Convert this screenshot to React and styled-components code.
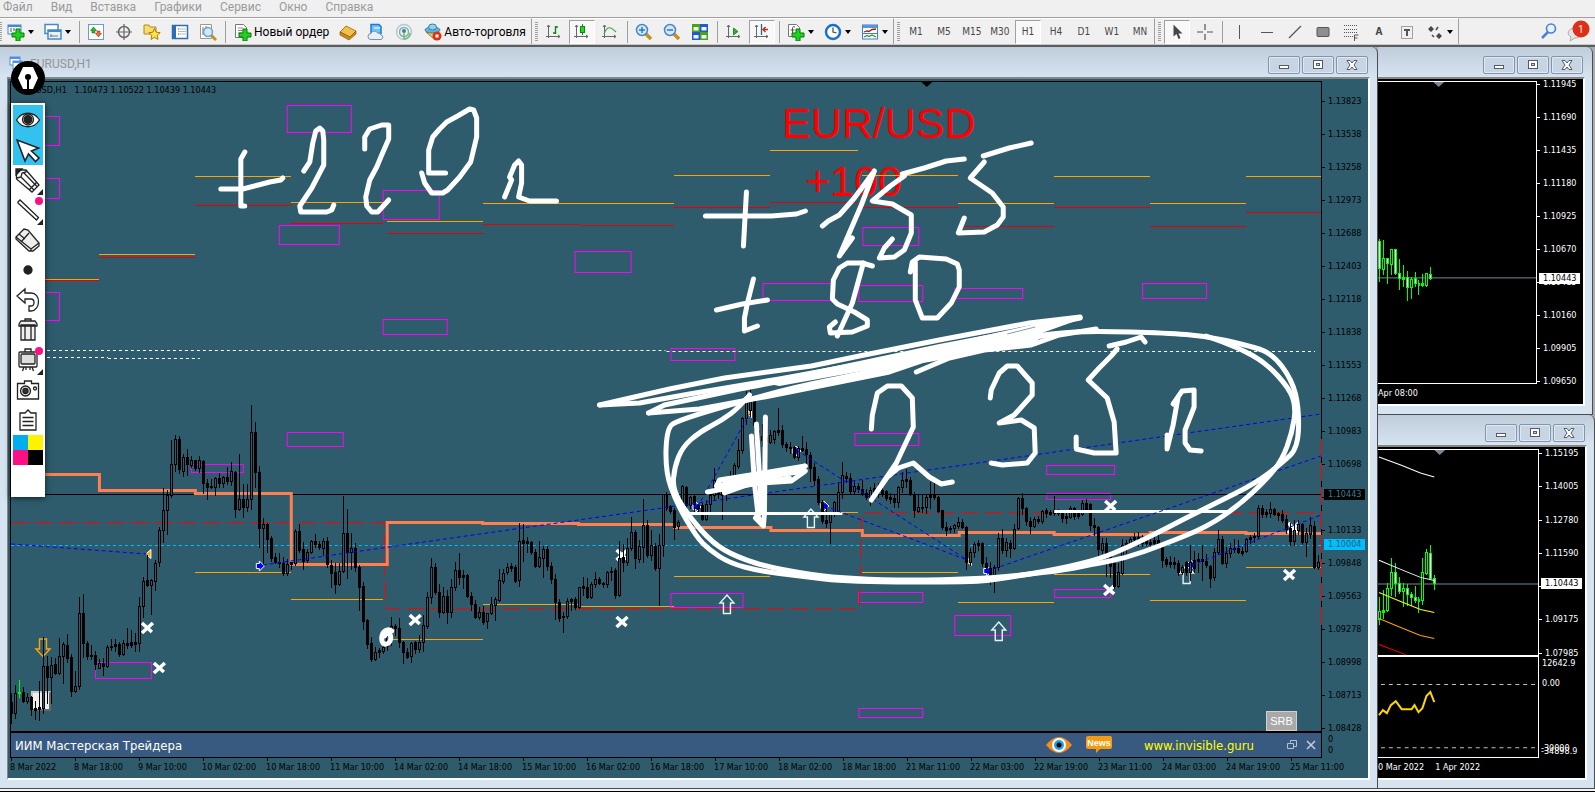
import React, { useState } from 'react';
import styled, { createGlobalStyle, css } from 'styled-components';

const TEAL = '#2e5c6d';

const GlobalStyle = createGlobalStyle`
  * {
    box-sizing: border-box;
  }

  body {
    margin: 0;
    background: #f0f0f0;
    font-family: Roboto, 'Noto Sans', sans-serif;
    font-size: 12px;
  }

  button {
    padding: 0;
    border: 0;
    background: none;
    color: inherit;
    font: inherit;
  }
`;

const Page = styled.div`
  display: flex;
  flex-direction: column;
  min-height: 100vh;
  overflow: hidden;
`;

/* ---------- menu and toolbar ---------- */

const MenuBar = styled.nav`
  display: flex;
  align-items: flex-start;
  gap: 18px;
  height: 17px;
  padding-left: 3px;
  color: #9a9a9a;
  line-height: 14px;
`;

const ToolBar = styled.div`
  display: flex;
  height: 28px;
  border-top: 1px solid #a0a0a0;
  border-bottom: 1px solid #c8c8c8;
`;

const Group = styled.div`
  display: flex;
  align-items: center;
  border-top: 1px solid #fff;
  border-right: 1px solid #a0a0a0;
`;

const Grip = styled.span`
  width: ${props => (props.$edge ? 2 : 3)}px;
  height: 20px;
  margin: ${props => (props.$edge ? '0' : '0 2px 0 3px')};
  background: repeating-linear-gradient(#a0a0a0 0 1px, transparent 1px 2px);
`;

const Separator = styled.span`
  width: 1px;
  height: 22px;
  margin: 0 2px 0 3px;
  background: #a0a0a0;
`;

const ToolButton = styled.button`
  display: flex;
  align-items: center;
  justify-content: center;
  width: 26px;
  height: 24px;
  margin: 0 1px;
  color: #484848;
  font-family: 'DejaVu Sans Condensed', 'DejaVu Sans', sans-serif;
  font-size: 10px;

  ${props =>
    props.$pressed &&
    css`
      border: 1px solid;
      border-color: #a0a0a0 #fff #fff #a0a0a0;
      background: #f8f8f8;
    `}
`;

const DropButton = styled.button`
  display: flex;
  align-items: center;
  gap: 3px;
  width: 37px;
  height: 24px;
  padding-left: 5px;

  &::after {
    content: '';
    border: 3px solid transparent;
    border-top: 4px solid #000;
    border-bottom: 0;
  }
`;

const TextButton = styled.button`
  display: flex;
  align-items: center;
  gap: 2px;
  height: 24px;
  padding: 0 5px 0 6px;
  color: #000;
  white-space: nowrap;
`;

const Tray = styled.div`
  display: flex;
  align-items: center;
  gap: 8px;
  margin-left: auto;
  padding-right: 5px;
`;

/* ---------- MDI windows ---------- */

const Workspace = styled.main`
  display: grid;
  grid-template-columns: minmax(0, 1fr) 217px;
  flex: 1;
  border-top: 2px solid #5c5c5c;
  background: #a9adb3;
`;

const Windows = styled.div`
  display: flex;
  flex-direction: column;
  min-width: 0;
`;

const Frame = styled.section`
  position: relative;
  display: flex;
  flex: ${props => props.$share || 1} 0 0;
  flex-direction: column;
  min-width: 0;
  margin-right: ${props => props.$inset || 0}px;
  padding: 0 7px 8px ${props => (props.$main ? 7 : 0)}px;
  border-right: 1px solid #4d4d4d;
  border-bottom: 1px solid #4d4d4d;
  border-top-right-radius: 6px;
  background: linear-gradient(#bfccda, #d6e3f0 30px);
`;

const TitleBar = styled.header`
  display: flex;
  gap: 2px;
  height: 30px;
  padding: 9px 2px 0 2px;
  color: #959595;
  line-height: 16px;
`;

const WindowName = styled.h1`
  flex: 1;
  margin: 0;
  padding-left: 5px;
  font-size: 12px;
  font-weight: 400;
`;

const WindowButton = styled.button`
  display: flex;
  align-items: center;
  justify-content: center;
  width: 32px;
  height: 18px;
  border: 1px solid #8593ab;
  border-radius: 2px;
  background: #c6d4e4;
  box-shadow: inset 0 0 0 1px #dde8f3;
`;

const Client = styled.div`
  display: flex;
  flex: 1;
  flex-direction: column;
  min-height: 0;
  padding: ${props => (props.$dark ? '2px 0 0' : '2px 0 0 2px')};
  border: solid #fff;
  border-width: 2px 2px 2px ${props => (props.$dark ? 0 : 1)}px;
  border-top-color: #868686;
  border-left-color: #868686;
  background: ${props => (props.$dark ? '#000' : TEAL)};
  color: ${props => (props.$dark ? '#fff' : '#000')};
  font-family: 'DejaVu Sans Condensed', 'DejaVu Sans', sans-serif;
  font-size: 9px;
  line-height: 11px;
`;

const Row = styled.div`
  position: relative;
  display: flex;
  flex: ${props => (props.$grow ? `${props.$grow} 0 0` : 'none')};
  min-height: 0;
`;

const Plot = styled.div`
  position: relative;
  flex: 1;
  min-width: 0;
  border: 1px solid ${props => (props.$light ? '#fff' : '#000')};
  border-left-width: ${props => (props.$light ? 0 : 1)}px;

  & > svg {
    position: absolute;
    inset: 0;
    width: 100%;
    height: 100%;
    overflow: visible;
  }
`;

const Axis = styled.div`
  position: relative;
  display: flex;
  flex-direction: column;
  justify-content: space-between;
  width: 46px;
  margin: ${props => props.$margin || '0'};
`;

const Price = styled.span`
  display: flex;
  align-items: center;
  height: 11px;

  &::before {
    content: '';
    width: 3px;
    height: 1px;
    margin-right: 3px;
    background: currentColor;
  }
`;

const PriceTag = styled.span`
  position: absolute;
  top: ${props => props.$top}px;
  left: 2px;
  width: 41px;
  height: 11px;
  padding-left: 4px;
  background: ${props => props.$bg};
  color: ${props => props.$ink};
`;

const TimeAxis = styled.div`
  display: grid;
  grid-template-columns: repeat(21, minmax(0, 1fr));
  height: 20px;
  padding-right: 14px;
`;

const Time = styled.span`
  position: relative;
  padding-top: 4px;
  white-space: nowrap;

  &::before {
    content: '';
    position: absolute;
    top: 0;
    left: 1px;
    height: 3px;
    border-left: 1px solid currentColor;
  }
`;

const SideTimes = styled.div`
  display: flex;
  gap: 11px;
  height: 20px;
  padding-top: 4px;
  overflow: hidden;
  white-space: nowrap;
`;

const Quote = styled.div`
  position: absolute;
  top: 3px;
  left: 8px;
  white-space: pre;
`;

const BigNote = styled.div`
  position: absolute;
  top: ${props => props.$top}px;
  left: ${props => props.$left}px;
  color: #f00;
  font-family: 'Liberation Sans', Arial, sans-serif;
  font-size: 43px;
  line-height: 48px;
`;

const Srb = styled.button`
  position: absolute;
  right: 24px;
  bottom: 0;
  width: 31px;
  height: 20px;
  border: 1px solid #d0d0d0;
  background: #a9a9a9;
  color: #fff;
  font-family: 'Liberation Sans', Arial, sans-serif;
  font-size: 11px;
`;

const ClosePatch = styled.button`
  position: absolute;
  top: 609px;
  left: 20px;
  width: 20px;
  height: 20px;
  border: 2px solid;
  border-color: #c8c8c8 #666 #666 #c8c8c8;
  background: #ededed;
`;

const Indicator = styled.div`
  display: flex;
  flex: 1;
  align-items: center;
  height: 26px;
  padding: 0 5px 0 4px;
  border: 1px solid #000;
  background: #385a80;
  color: #fff;
`;

const IndicatorName = styled.span`
  margin-right: auto;
  font-size: 13px;
`;

const SiteLink = styled.a`
  margin: 0 32px;
  color: #ff0;
  font-size: 13px;
  text-decoration: none;
`;

const IconButton = styled.button`
  display: flex;
  margin-left: ${props => props.$gap || 0}px;
`;

const ZeroAxis = styled.div`
  width: 46px;
  padding: 2px 0 0 6px;
`;

const SubLabels = styled.div`
  position: relative;
  display: flex;
  flex-direction: column;
  gap: 9px;
  width: 46px;
  padding: 2px 0 0 3px;
`;

const LowLabel = styled.span`
  position: absolute;
  bottom: ${props => props.$bottom}px;
  left: 2px;
`;

const StatusStrip = styled.footer`
  height: 3px;
  border-bottom: 1px solid #000;
  background: #f4f4f4;
`;

/* ---------- floating pen panel ---------- */

const PenPanel = styled.aside`
  position: absolute;
  top: 14px;
  left: 11px;
  width: 34px;
`;

const PenBadge = styled.button`
  display: block;
  width: 34px;
  height: 34px;
  border-radius: 50%;
  background: #000;
`;

const PenTools = styled.div`
  display: grid;
  grid-template-columns: 30px;
  margin-top: 8px;
  padding: 2px 2px 32px;
  background: #fff;
  box-shadow: 0 1px 6px rgba(0, 0, 0, 0.7);
`;

const PenTool = styled.button`
  position: relative;
  height: 30px;
  background: ${props => (props.$active ? '#33c1ef' : 'transparent')};

  & > svg {
    display: block;
  }

  ${props =>
    props.$more &&
    css`
      &::after {
        content: '';
        position: absolute;
        right: 0;
        bottom: 0;
        border: 3px solid #222;
        border-top-color: transparent;
        border-left-color: transparent;
      }
    `}
`;

const Swatches = styled.div`
  display: grid;
  grid-template-columns: 15px 15px;
`;

const Swatch = styled.button`
  height: 15px;
  background: ${props => props.$color};
`;

/* ---------- data ---------- */

// high, top of body, bottom of body, low; u = hollow, d = filled
const CANDLES = `693 702 713 723 d,685 693 713 718 u,680 692 693 697 g,687 692 701 702 d,693 697 701 703 u,
696 697 709 715 d,701 708 710 719 d,681 707 709 720 d,637 666 708 713 u,656 666 677 703 d,657 665 677 703 u,
658 664 673 674 d,638 656 673 674 u,642 644 656 683 u,634 645 658 662 d,654 657 691 696 d,671 686 691 692 u,
597 613 686 689 u,594 613 643 657 d,641 643 656 659 d,645 655 656 659 d,651 655 664 669 d,659 663 668 668 u,
658 663 666 675 d,645 647 666 667 u,639 646 647 650 d,639 644 646 651 d,642 644 654 656 d,640 643 654 655 u,
628 643 645 648 d,630 642 645 647 d,633 642 644 651 d,597 606 643 651 u,577 581 606 617 u,555 580 585 586 d,
579 580 585 614 u,560 563 581 590 u,527 530 562 566 u,488 510 530 542 u,490 495 510 534 u,440 464 495 497 u,
435 439 464 471 u,436 439 469 473 d,454 457 471 476 u,449 457 464 475 d,456 460 465 467 u,460 460 468 470 d,
456 460 468 472 u,460 461 483 493 d,479 483 487 499 d,479 486 487 488 d,477 478 487 495 u,473 478 483 487 d,
476 477 483 487 u,467 477 481 484 d,462 471 481 485 u,471 472 509 517 d,454 499 509 510 u,484 499 507 517 d,
484 499 507 511 u,405 432 499 509 u,422 432 472 487 d,466 472 528 547 d,518 524 528 563 u,523 524 539 552 d,
536 538 558 561 d,553 557 562 563 d,553 562 563 567 d,557 563 573 575 d,559 564 573 575 u,562 562 564 569 d,
529 531 563 565 u,524 531 550 552 d,542 549 561 569 d,549 552 560 562 u,540 541 552 553 u,534 541 544 547 d,
541 544 547 549 d,538 541 548 555 u,537 541 564 567 d,560 565 573 587 d,563 572 584 593 d,563 571 584 585 u,
496 533 571 572 u,509 533 552 578 d,533 548 552 569 u,543 548 567 571 d,565 567 587 610 d,582 586 621 629 d,
619 620 644 648 d,637 643 659 661 d,647 652 659 660 u,648 650 652 657 d,645 647 651 653 u,630 636 646 650 u,
617 626 640 645 u,624 626 628 635 d,618 628 642 647 d,641 642 652 663 d,648 652 657 658 d,642 643 656 662 u,
641 642 649 653 d,635 642 649 652 u,615 625 642 651 u,592 597 626 628 u,558 567 597 603 u,563 567 592 594 d,
584 592 612 617 d,587 596 612 613 u,590 596 612 623 d,579 587 612 617 u,562 570 587 590 u,553 570 577 584 d,
570 575 577 588 d,574 575 596 597 d,592 596 604 610 d,600 604 617 618 d,607 612 617 619 u,606 612 622 624 d,
613 613 621 628 u,597 604 613 614 u,597 599 605 620 u,569 580 600 601 u,569 573 581 583 u,563 567 572 574 u,
563 566 568 571 d,565 567 581 582 d,523 541 580 586 u,524 540 543 561 d,537 541 543 552 d,541 542 552 554 d,
549 552 566 567 d,541 557 566 567 u,546 549 558 577 u,546 549 566 570 d,562 566 579 583 d,574 579 602 619 d,
599 602 618 621 d,612 616 617 632 d,598 601 616 618 u,598 599 601 610 d,597 599 607 609 d,587 587 607 608 u,
577 586 588 595 d,578 587 597 598 d,582 584 597 598 u,572 579 584 587 u,577 579 583 584 d,582 583 584 587 d,
571 572 584 587 u,567 571 572 580 d,568 570 595 598 d,541 558 595 596 u,544 557 562 571 d,538 548 562 565 u,
517 532 548 550 u,530 532 558 568 d,540 546 559 562 u,499 525 547 562 u,520 525 555 557 d,530 545 555 560 u,
543 546 568 570 d,534 545 568 605 u,494 494 545 556 u,492 494 508 510 d,505 506 511 513 d,508 510 527 539 d,
520 522 526 529 u,485 486 512 515 u,486 487 505 510 d,496 497 505 508 u,495 496 504 512 d,504 505 508 514 d,
503 505 519 520 d,500 504 519 520 u,490 495 504 512 u,468 480 495 500 u,478 482 494 498 d,484 486 495 519 d,
480 484 492 500 u,471 478 486 492 u,463 465 477 480 u,439 450 466 468 u,417 418 450 453 u,391 395 418 424 u,
389 396 410 416 u,398 400 425 430 d,425 430 440 450 d,424 436 440 446 d,420 437 441 443 d,430 435 442 443 u,
430 431 439 443 u,408 430 432 435 d,425 430 444 447 d,442 444 447 451 d,442 447 448 453 d,446 447 457 458 d,
446 448 457 460 u,436 448 450 451 d,442 449 454 463 d,452 455 468 481 d,463 467 480 485 d,476 479 502 504 d,
500 502 521 523 d,507 520 523 527 d,512 514 522 543 u,501 502 514 516 u,482 492 513 514 u,462 475 492 498 u,
472 476 478 482 d,473 478 491 493 d,480 486 491 493 u,483 486 489 492 d,480 489 493 495 d,489 493 497 499 d,
487 490 497 505 u,483 488 492 495 d,483 489 492 497 d,487 490 494 496 d,490 491 498 500 d,493 497 499 503 d,
495 498 502 507 d,486 487 502 507 u,472 480 487 492 u,469 479 481 487 d,477 480 493 495 d,492 494 510 517 d,
495 507 511 512 u,495 507 508 512 d,494 497 507 513 u,482 494 497 508 d,483 494 497 499 d,496 497 511 512 d,
510 510 527 529 d,522 527 530 535 d,526 528 529 532 d,524 525 528 532 u,517 522 526 528 u,519 522 527 528 d,
526 527 562 569 d,548 552 562 565 u,542 544 552 557 u,540 543 545 550 d,542 543 563 566 d,557 563 567 568 d,
562 568 578 584 d,565 567 578 592 u,533 538 567 570 u,529 538 550 553 d,538 542 550 556 u,540 543 548 557 d,
524 529 548 549 u,497 498 528 529 u,493 498 508 514 d,507 508 521 525 d,517 521 526 533 d,517 519 526 527 u,
516 519 521 523 d,510 511 521 523 u,508 510 513 517 d,510 512 514 515 d,496 510 513 515 d,509 511 513 515 d,
511 512 518 522 d,512 516 518 523 u,506 508 517 518 u,507 508 516 519 d,510 512 516 518 d,500 503 514 515 u,
499 503 511 512 d,503 504 525 530 d,518 525 527 535 d,526 527 549 557 d,538 543 550 553 u,538 543 555 576 d,
553 556 566 577 d,560 563 586 588 d,563 572 586 587 u,539 545 573 574 u,540 543 547 553 d,537 539 544 547 u,
533 537 539 543 d,532 537 543 546 d,535 538 543 546 d,537 539 543 545 d,538 542 544 546 d,537 540 543 545 d,
530 540 546 547 d,546 547 560 567 d,557 559 564 566 d,556 562 564 567 d,557 562 564 568 d,560 563 572 575 d,
565 567 572 574 u,561 562 572 575 d,545 562 572 580 u,551 560 568 572 d,553 559 561 572 d,545 559 561 580 d,
554 561 565 567 d,565 566 578 587 d,548 552 577 580 u,530 539 552 554 u,536 539 563 564 d,547 553 563 567 u,
543 548 553 557 u,539 548 549 552 d,540 548 552 553 d,547 551 553 555 d,538 539 551 552 u,535 537 539 543 d,
533 536 537 542 d,505 508 536 538 u,505 508 514 517 d,509 512 514 517 d,502 509 513 517 u,508 509 514 515 d,
512 513 515 520 d,510 514 520 522 d,515 519 529 533 d,523 528 541 545 d,520 530 541 545 u,520 524 530 534 u,
523 524 542 544 d,528 533 542 556 u,517 525 534 538 u,521 526 567 568 d,555 562 567 569 u`;

const HOUR4 = `239 241 269 282 d,240 259 270 275 u,259 259 264 284 d,250 250 265 275 u,250 250 274 275 d,
260 274 279 290 d,266 278 280 287 d,272 278 288 301 d,278 280 288 299 u,273 279 284 287 d,281 284 286 295 d,
275 284 286 287 d,274 274 286 287 u,268 275 279 280 d`;

const DAILY = `597 611 618 623 u,590 610 612 617 d,583 588 610 611 u,558 572 588 595 u,563 572 583 596 d,
577 583 591 593 d,583 588 591 606 u,584 588 594 605 d,592 594 597 605 d,586 597 600 602 d,597 599 601 612 d,
558 572 600 604 u,549 552 573 574 u,545 553 578 579 d,575 578 583 589 d`;

const PRICES = ['1.13823', '1.13538', '1.13258', '1.12973', '1.12688', '1.12403', '1.12118', '1.11838', '1.11553', '1.11268', '1.10983', '1.10698', '1.10413', '1.10133', '1.09848', '1.09563', '1.09278', '1.08998', '1.08713', '1.08428'];
const HOUR4_PRICES = ['1.11945', '1.11690', '1.11435', '1.11180', '1.10925', '1.10670', '1.10415', '1.10160', '1.09905', '1.09650'];
const DAILY_PRICES = ['1.15195', '1.14005', '1.12780', '1.11590', '1.10365', '1.09175', '1.07985'];
const TIMES = ['8 Mar 2022', '8 Mar 18:00', '9 Mar 10:00', '10 Mar 02:00', '10 Mar 18:00', '11 Mar 10:00', '14 Mar 02:00', '14 Mar 18:00', '15 Mar 10:00', '16 Mar 02:00', '16 Mar 18:00', '17 Mar 10:00', '18 Mar 02:00', '18 Mar 18:00', '21 Mar 11:00', '22 Mar 03:00', '22 Mar 19:00', '23 Mar 11:00', '24 Mar 03:00', '24 Mar 19:00', '25 Mar 11:00'];

// x1, x2, y
const ORANGE_LEVELS = [
  [45, 99, 279], [99, 195, 254], [195, 291, 176], [291, 383, 202], [387, 483, 221], [483, 675, 203],
  [675, 771, 175], [771, 859, 150], [863, 959, 175], [959, 1055, 203], [1055, 1151, 176], [1151, 1247, 203],
  [1247, 1322, 176], [195, 291, 572], [291, 383, 599], [387, 483, 639], [483, 579, 604], [579, 675, 606],
  [675, 771, 576], [771, 859, 512], [863, 959, 572], [959, 1055, 602], [1055, 1151, 574], [1151, 1247, 600],
  [1247, 1322, 567],
];
const RED_LEVELS = [
  [45, 99, 280], [99, 195, 257], [195, 291, 205], [291, 383, 223], [387, 483, 233], [483, 579, 224],
  [579, 675, 225], [675, 771, 207], [771, 859, 202], [863, 959, 207], [959, 1055, 226], [1055, 1151, 207],
  [1151, 1247, 226], [1247, 1322, 212],
];
// left, top, right, bottom
const ZONES = [
  [11, 116, 59, 145], [11, 178, 59, 198], [11, 292, 59, 320], [287, 105, 351, 132], [279, 225, 339, 244],
  [383, 190, 439, 219], [575, 251, 631, 272], [383, 319, 447, 334], [671, 348, 735, 360], [287, 432, 343, 446],
  [191, 464, 243, 472], [95, 662, 151, 678], [671, 593, 743, 607], [855, 433, 919, 445], [859, 592, 923, 602],
  [955, 615, 1011, 635], [1047, 465, 1115, 474], [1047, 493, 1111, 499], [1055, 589, 1111, 597],
  [863, 227, 919, 245], [763, 283, 832, 300], [859, 285, 923, 301], [955, 288, 1023, 298],
  [1143, 283, 1207, 298], [859, 708, 923, 717],
];
const TRADES = [
  '11,544 147,554', '263,565 1322,414', '698,507 750,414', '797,450 968,560', '825,506 968,560',
  '988,571 1322,456', '1193,565 1322,515',
];
const CROSSES = [[147, 628], [159, 668], [415, 620], [622, 555], [622, 622], [1111, 506], [1110, 590], [1290, 575], [1294, 528]];
const UP_ARROWS = [[727, 595], [811, 509], [999, 622], [1187, 565]];
const ENTRIES = [[260, 566], [697, 507], [797, 451], [825, 506], [988, 571], [1192, 565]];
const EXITS = [[149, 554], [750, 413], [970, 561]];

const STROKES = [
  '245,152 241,159 241,206 245,206',
  '221,189 243,189 270,182 281,180 283,178',
  '304,171 310,162 313,143 316,131 320,128 323,131 324,140 324,165 312,188 300,206 301,212 327,212 332,210 334,205',
  '365,149 365,137 370,129 382,125 389,125 389,139 382,155 377,167 370,180 366,197 367,206 372,212 378,212 389,200',
  '446,173 429,173 429,150 433,137 440,129 447,122 458,116 470,109 474,110 477,118 477,137 471,162 460,177 448,190 443,193 432,193 425,183 422,173',
  '505,197 512,180 510,177 515,165 519,161 522,165 522,183 519,197 530,201 557,201',
  '747,192 744,246',
  '706,216 772,216 797,214 806,211',
  '823,226 829,221 840,215 855,198 875,171 862,205 840,256 853,238',
  '965,159 947,161 925,168 903,174',
  '905,176 891,186 873,201 893,204 912,215 912,233 905,250 895,257 880,258 885,248 893,239',
  '1032,143 1010,148 984,156',
  '985,162 971,178 993,193 1004,207 1004,217 998,225 985,232 959,233 965,218',
  '754,279 748,303 745,318 745,331 758,326',
  '717,310 743,304 768,300',
  '873,266 863,263 848,263 840,268 834,280 833,299 838,304 855,312 868,320 868,326 853,332 831,333 830,327 836,322',
  '864,263 853,303 838,336',
  '911,272 913,262 920,257 947,259 958,264 960,270 960,287 952,303 938,318 923,318 916,300 916,262',
  '872,429 873,415 878,393 888,386 902,386 913,398 914,427 897,463 872,500 888,477 899,468 914,463 930,477 942,484 953,482',
  '991,398 992,390 1000,373 1008,366 1018,366 1033,383 1033,395 1015,415 1000,423 1022,420 1035,428 1036,453 1028,463 1003,465 992,463',
  '1146,342 1142,337 1127,342 1110,346',
  '1118,349 1112,356 1100,368 1089,380 1108,398 1115,422 1117,453 1095,453 1077,449 1077,437',
  '1168,435 1168,449 1174,425 1179,397 1174,404 1183,391 1195,390 1195,407 1186,430 1186,443 1191,450 1202,451',
  '766,417 765,513 764,526 756,518 762,510 757,424',
  '752,436 755,483 759,518 764,524',
  '708,492 740,486 806,466 770,472 720,480 717,486 770,476 806,471 792,481 750,484 725,493',
  '726,483 796,470 725,489 790,478',
  '600,405 670,389 725,378 812,366 860,356 940,340 1030,323 1081,317',
  '600,405 640,403 690,394 780,379 900,357 1030,328 1081,318',
  '649,413 665,405 740,389 830,372 920,355 1030,330',
  '649,413 700,409 770,396 840,382 890,372 940,355',
  '917,372 950,358 985,350 1032,345 1060,335 1097,329',
];

const LOOPS = [
  '920,360 862,374 790,388 677,420 667,430 666,472 677,503 697,537 710,550 730,563 760,571 800,576 850,582 975,582 1000,579 1060,569 1100,559 1127,548 1160,532 1183,520 1217,503 1257,483 1283,463 1299,448 1300,408 1293,380 1273,353 1247,345 1207,336 1167,333 1095,331 1057,333 1000,341',
  '750,395 740,407 723,420 700,432 683,447 675,467 673,490 690,517 713,543 737,557 775,569 850,580 975,580 1060,571 1090,565 1127,558 1163,545 1208,527 1240,505 1267,480 1283,460 1293,433 1297,407 1290,388 1267,363 1240,348 1207,336',
];

function smooth(points) {
  const list = points.split(' ').map(point => point.split(',').map(Number));
  const last = list[list.length - 1];
  const curves = list.slice(1, -1).map(([x, y], i) => {
    const [nx, ny] = list[i + 2];
    return `Q${x} ${y} ${(x + nx) / 2} ${(y + ny) / 2}`;
  });
  return `M${list[0].join(' ')}${curves.join('')}L${last.join(' ')}`;
}

/* ---------- chart parts ---------- */

function Candles({ data, start, line, hollow, solid }) {
  return (
    <g shapeRendering="crispEdges">
      {data.split(',').map((item, i) => {
        const [high, top, bottom, low, kind] = item.trim().split(' ');
        const x = start + i * 4;
        const height = Math.max(bottom - top, 1);
        const color = kind === 'g' ? '#0f0' : line;
        return (
          <g key={x}>
            <rect x={x} y={high} width="1" height={low - high + 1} fill={color} />
            <rect x={x - 1} y={top} width="3" height={height + 1} fill={color} />
            {height > 2 && (
              <rect x={x} y={+top + 1} width="1" height={height - 1} fill={kind === 'u' ? hollow : solid} />
            )}
          </g>
        );
      })}
    </g>
  );
}

function Levels({ items, color }) {
  return items.map(([x1, x2, y]) => <rect key={`${x1}-${y}`} x={x1} y={y} width={x2 - x1} height="1" fill={color} />);
}

function Markers() {
  return (
    <>
      <g fill="none" stroke="#fff" strokeWidth="3.500">
        {CROSSES.map(([x, y]) => <path key={`${x}-${y}`} d={`M${x - 5} ${y - 5}L${x + 5} ${y + 4}M${x + 6} ${y - 5}L${x - 5} ${y + 5}`} />)}
      </g>
      <g fill="none" stroke="#e8f4f4" strokeWidth="1.4">
        {UP_ARROWS.map(([x, y]) => <path key={x} d={`M${x + 0.5} ${y}l7 8h-3.500v10.500h-7v-10.500h-3.500z`} />)}
      </g>
      <path d="M39.500 639h7v10h3.500l-7 7.500-7-7.500h3.500z" fill="none" stroke="#ffa500" strokeWidth="1.4" />
      <g fill="#00f" stroke="#fff">
        {ENTRIES.map(([x, y]) => <path key={x} d={`M${x - 3.5} ${y - 2.5}h3v-2.500l5 5-5 5v-2.500h-3z`} />)}
      </g>
      <g fill="#ffa500" stroke="#fff">
        {EXITS.map(([x, y]) => <path key={x} d={`M${x - 3} ${y}l5-4.500v9z`} />)}
      </g>
    </>
  );
}

function MainChart() {
  return (
    <svg viewBox="11 82 1311 649" preserveAspectRatio="none">
      <g shapeRendering="crispEdges" fill="none">
        <Levels items={RED_LEVELS} color="#e80000" />
        <Levels items={ORANGE_LEVELS} color="#ffa500" />
        {ZONES.map(([l, t, r, b]) => (
          <rect key={`${l}-${t}`} x={l + 0.5} y={t + 0.5} width={r - l} height={b - t} stroke="#f0f" />
        ))}
        <path d="M11 494.5H1322" stroke="#000" />
        <path d="M11 545.5H1322" stroke="#00bfff" strokeDasharray="3 3" />
        <path d="M47 350.5H666M47 357.5H108M108 358.5H200M667 351.5H1316" stroke="#fff" strokeDasharray="3 3" />
        <path d="M11 522.5H384.500V560L386.500 608.500H860L862.500 512.500H1322" stroke="#f00" strokeDasharray="18 6" />
        <path d="M1322.500 439V626" stroke="#f00" strokeWidth="2" strokeDasharray="18 6" />
      </g>
      <path
        d="M45 474.500H99.500V490.500H195.500V493.500H291.500V564.500H387.500V522.500H483V523.500H579V524.500H675V527.500H771.500V530.500H863V535.500H960V532.500H1055V534.500H1151V532.500H1247V533.500H1322"
        fill="none"
        stroke="#ff7f50"
        strokeWidth="3"
      />
      <Markers />
      <Candles data={CANDLES} start={11} line="#000" hollow={TEAL} solid="#000" />
      <path d="M690 513.500H843M1055 511.500H1230" stroke="#fff" strokeWidth="3" />
      <g fill="none" stroke="#00f" strokeDasharray="4 3" shapeRendering="crispEdges">
        {TRADES.map(points => <polyline key={points} points={points} />)}
      </g>
      <path d="M922 82h11l-5.500 5z" fill="#000" />
      <path d="M11 752l5 5h-5z" fill="#000" />
      <path d="M392 631c-4-3-10 0-10 8s9 6 9-1c0-6-4-6-6-2" fill="none" stroke="#fff" strokeWidth="5" strokeLinecap="round" />
      <path d="M760 382L860 361 940 344 1040 325 1082 319 1040 334 1092 330 1040 339 1030 347 980 352 930 362 880 368 780 386z" fill="#fff" />
      <g fill="none" stroke="#fff" strokeWidth="5" strokeLinecap="round" strokeLinejoin="round">
        {STROKES.map(points => <polyline key={points} points={points} />)}
        {LOOPS.map(points => <path key={points} d={smooth(points)} />)}
      </g>
      <path d="M1008 334l28-7" stroke={TEAL} strokeWidth="0.6" />
    </svg>
  );
}

function WindowControls() {
  return (
    <>
      <WindowButton aria-label="Свернуть">
        <svg width="12" height="12"><rect x="1.500" y="6.500" width="9" height="3" fill="#fff" stroke="#555a6a" /></svg>
      </WindowButton>
      <WindowButton aria-label="Развернуть">
        <svg width="12" height="12" fill="#fff" stroke="#555a6a">
          <rect x="1.500" y="1.500" width="9" height="8" />
          <rect x="4.500" y="4.500" width="3" height="2" fill="#c6d4e4" />
        </svg>
      </WindowButton>
      <WindowButton aria-label="Закрыть">
        <svg width="12" height="12" fill="#fff" stroke="#555a6a">
          <path d="M1 1.500h3l2 2.500 2-2.500h3L8 6l3 4.500H8L6 8l-2 2.500H1L4 6z" />
        </svg>
      </WindowButton>
    </>
  );
}

/* ---------- toolbar icons ---------- */

const Plus = () => <path d="M9 6h4v4h4v4h-4v4H9v-4H5v-4h4z" fill="#1ed31e" stroke="#087808" />;
const Glass = () => (
  <>
    <path d="M10 10l6 6" stroke="#c8901a" strokeWidth="3.500" />
    <circle cx="7" cy="7" r="5.500" fill="#cfe8fa" stroke="#4a86c4" strokeWidth="1.500" />
  </>
);
const AxisLines = () => <path d="M3.500 2v13M1 13.500h14M2 4l1.500-2L5 4M13 12l2 1.500-2 1.500" stroke="#666" />;

const icons = {
  newChart: <><rect x="1" y="2" width="13" height="9" fill="#f4faff" stroke="#4788c8" /><path d="M1 3h13" stroke="#4788c8" strokeWidth="2" /><path d="M4 5v4M7 5v3" stroke="#555" /><Plus /></>,
  profiles: <><rect x="1" y="1.500" width="13" height="9" fill="#fff" stroke="#4788c8" strokeWidth="1.500" /><rect x="4" y="7" width="13" height="9" fill="#e8f2fc" stroke="#4788c8" strokeWidth="1.500" /><path d="M4 8h13" stroke="#4788c8" strokeWidth="2" /><path d="M6 13h8M7 11v3" stroke="#777" /></>,
  market: <><rect x="1.500" y="1.500" width="15" height="15" fill="#fff" stroke="#6a9ed0" /><path d="M6.500 4l3 3.500H8V10H5V7.500H3.500z" fill="#2bb52b" stroke="#087808" strokeWidth=".6" /><path d="M11.500 14l3-3.500H13V8h-3v2.500H8.500z" fill="#f06a40" stroke="#a83010" strokeWidth=".6" /></>,
  target: <><circle cx="9" cy="9" r="5.500" stroke="#666" strokeWidth="1.500" /><path d="M9 1v16M1 9h16" stroke="#666" strokeWidth="1.200" /></>,
  star: <><path d="M1 2h5l1 2h6v7H1z" fill="#f6dc6c" stroke="#b48a1c" /><path d="M11.500 5.500l1.700 3.700 4 .5-3 2.700.8 4-3.500-2-3.500 2 .8-4-3-2.700 4-.5z" fill="#ffe14d" stroke="#b07a08" /></>,
  list: <><rect x="1.500" y="2.500" width="15" height="13" fill="#fff" stroke="#2f6cb0" strokeWidth="1.500" /><path d="M3.500 3v12" stroke="#2f6cb0" strokeWidth="3" /><path d="M7 6h8M7 8.500h8M7 11h8" stroke="#aebccd" /><path d="M7 6h1M7 11h1" stroke="#e33" /></>,
  tester: <><path d="M1.500 1.500h11v14h-11z" fill="#fff" stroke="#999" /><path d="M4 4v8M7 3v5" stroke="#777" /><path d="M12 12l5 5" stroke="#c8901a" strokeWidth="3" /><circle cx="9" cy="9" r="4.500" fill="#cfe8fa" stroke="#6f9fc8" strokeWidth="1.500" /></>,
  order: <><path d="M1.500 1.500h8l3 3v10h-11z" fill="#fff" stroke="#777" /><path d="M4 5h5M4 7.500h6M4 10h4" stroke="#888" /><Plus /></>,
  book: <><path d="M1 9l6-6 10 5-6 6z" fill="#f2c04e" stroke="#b27a14" /><path d="M1 9v3l9 5 7-6V8l-6 6z" fill="#c98b1e" stroke="#8b5b0b" strokeWidth=".7" /></>,
  cloud: <><path d="M4 1.500h8l2 2v7H4z" fill="#6fc3f8" stroke="#1a7ecb" strokeWidth="1.500" /><path d="M7 5h6" stroke="#fff" /><path d="M4 16.500a3 3 0 010-6 3.500 3.500 0 016.500-.5 3 3 0 013.500 2 2.300 2.300 0 010 4.500z" fill="#e8eef8" stroke="#7790b0" /></>,
  signal: <><circle cx="9" cy="9" r="7.500" stroke="#b2cad8" strokeWidth="1.500" /><circle cx="9" cy="9" r="4.500" stroke="#86b090" strokeWidth="1.500" /><circle cx="9" cy="8" r="2" fill="#2f83c0" /><path d="M9 10v6a7 7 0 006-6" stroke="#6cbd76" strokeWidth="1.500" /></>,
  robot: <><path d="M2 9h13l-5 7z" fill="#f2c848" stroke="#a87c14" /><ellipse cx="8.500" cy="7" rx="7.500" ry="3" fill="#65b2dd" stroke="#3480aa" /><ellipse cx="8.500" cy="4" rx="4" ry="3" fill="#8fd0ee" stroke="#3480aa" /><circle cx="13" cy="13" r="4.500" fill="#e03014" /><rect x="11.500" y="11.500" width="3" height="3" fill="#fff" /></>,
  bars: <><AxisLines /><path d="M10.500 3v8M10.500 4H13M8 10h2.500" stroke="#0a8a0a" strokeWidth="1.400" /></>,
  candles: <><AxisLines /><path d="M9.500 1v11" stroke="#0a8a0a" /><rect x="7.500" y="3.500" width="4" height="6" fill="#23d723" stroke="#0a8a0a" /></>,
  line: <><AxisLines /><path d="M3 11C6 3 9 3 15 9" stroke="#3fa43f" strokeWidth="1.200" /></>,
  zoomIn: <><Glass /><path d="M4 7h6M7 4v6" stroke="#2f78c0" strokeWidth="1.500" /></>,
  zoomOut: <><Glass /><path d="M4 7h6" stroke="#2f78c0" strokeWidth="1.500" /></>,
  tiles: <><path d="M1 1h8v8H1zM9 9h8v8H9z" fill="#48a413" /><path d="M9 1h8v8H9zM1 9h8v8H1z" fill="#2459c9" /><path d="M2.500 4h5v3.500h-5zM10.500 4h5v3.500h-5zM2.500 12h5v3.500h-5zM10.500 12h5v3.500h-5z" fill="#eef4ff" /></>,
  scroll: <><AxisLines /><path d="M8.500 5l4.500 3.500L8.500 12z" fill="#27b327" stroke="#0a700a" strokeWidth=".7" /></>,
  shift: <><AxisLines /><path d="M8.500 1v11" stroke="#1a6a9a" strokeWidth="1.300" /><path d="M15 6.500h-4M12.500 4L10 6.500 12.500 9" stroke="#c03010" strokeWidth="1.500" /></>,
  indicator: <><path d="M1.500 1.500h8l3 3v9h-11z" fill="#fff" stroke="#777" /><path d="M8 4c-2-1-2.500 0-2.500 2v6M3.500 7h4" stroke="#555" /><Plus /></>,
  clock: <><circle cx="9" cy="9" r="7" fill="#fff" stroke="#1c71c6" strokeWidth="2.500" /><path d="M9 4.500V9l3.500 1" stroke="#444" strokeWidth="1.200" /></>,
  template: <><rect x="1.500" y="2" width="15" height="14" fill="#fff" stroke="#3f80c0" /><path d="M2 3.500h14" stroke="#5598dc" strokeWidth="3" /><path d="M3 9l3-1 2 .5 3-2 4-.5" stroke="#a02010" strokeWidth="1.300" /><path d="M2 10.500h14" stroke="#3f80c0" /><path d="M3 14l3-1.500 2 1 3-1.500 4 2" stroke="#2a9a2a" strokeWidth="1.300" /></>,
  cursor: <path d="M5.500 1.500v12l3-2.500 2 5 2-1-2-4.500h4z" fill="#484848" />,
  cross: <path d="M9 1v6M9 11v6M1 9h6M11 9h6" stroke="#555" strokeWidth="1.200" />,
  vline: <path d="M9.500 2v14" stroke="#555" />,
  hline: <path d="M3 9.500h12" stroke="#555" />,
  trend: <path d="M3 15L15 3" stroke="#555" strokeWidth="1.300" />,
  rect: <rect x="3" y="4.500" width="12" height="9" rx="1" fill="#8e8e8e" stroke="#555" />,
  fibo: <><path d="M2 2.500h14M2 6.500h14M2 9.500h14M2 13.500h9" stroke="#555" strokeDasharray="1 1" /><path d="M12.500 18v-6h4M12.500 15h3" stroke="#555" /></>,
  label: <><rect x="3.500" y="3.500" width="11" height="12" stroke="#555" strokeDasharray="1 1" /><path d="M6 7h6M9 7v6" stroke="#555" strokeWidth="2" /></>,
  shapes: <><path d="M5 3l3 3-3 3-3-3zM13 10l3 3-3 3-3-3z" fill="#484848" /><path d="M6 12l2 2M10 7l2-3" stroke="#484848" strokeWidth="1.500" /></>,
  search: <><path d="M8 10l-6 6" stroke="#4a80d8" strokeWidth="2.500" /><circle cx="11" cy="6.500" r="4.500" fill="#e8f2ff" stroke="#4a80d8" strokeWidth="1.600" /></>,
};

function Icon({ name }) {
  return <svg width="18" height="18" viewBox="0 0 18 18" fill="none">{icons[name]}</svg>;
}

function Tool({ name, label, pressed }) {
  return <ToolButton aria-label={label} $pressed={pressed}><Icon name={name} /></ToolButton>;
}

function Drop({ name, label }) {
  return <DropButton aria-label={label}><Icon name={name} /></DropButton>;
}

/* ---------- pen panel icons ---------- */

const penTools = [
  ['Показать', <><path d="M3.500 15C9 6 21 6 26.500 15 21 24 9 24 3.500 15z" fill="#fff" /><circle cx="15" cy="14.500" r="5.500" fill="#ddd" /><circle cx="15" cy="14.500" r="3.800" fill="#222" /></>],
  ['Курсор', <path d="M4 5l8 21 3.500-7 7 7.500 3.500-3.500-7.500-7 7-3z" fill="#fff" strokeWidth="1.600" />],
  ['Карандаш', <><path d="M3.500 5v9L19 27l7-7L13 5z" fill="#fff" /><path d="M3 4h6l-6 6z" fill="#222" /><path d="M4 13l4-1 1-4 4-1V5M8 12l13 13M11 8l13 13.500M16 25l8-8" /></>, true],
  ['Линия', <path d="M5 7l2-2 18.500 17.500-2 2.500L5 8z" fill="#fff" />, true, true],
  ['Ластик', <><path d="M3 12l8-8 4 1 11 13v3l-6 5h-4L3 14z" fill="#eee" /><path d="M8 17l8-9M11 4l0 0M3 12l15 12 8-6M18 24v2M6 9l6 5" /></>],
  ['Размер', <circle cx="15" cy="15" r="4" fill="#222" />],
  ['Отменить', <path d="M4 12l8-7v4h6c10 0 10 17 0 18h-2v-5h2c4 0 4-7 0-7h-6v4z" transform="translate(0 -1)" fill="#fff" />],
  ['Удалить', <><path d="M8 10v15h14V10zM6 9l2-3h14l2 3v2H6zM12 6V4h6v2" fill="#eee" /><path d="M12 11v14M18 11v14" /></>],
  ['Доска', <><rect x="6" y="7" width="18" height="15" rx="1" fill="#fff" /><rect x="8" y="9" width="14" height="10" rx="1" fill="#ddd" /><path d="M12 7V4h6v3M11 22l-1.500 4M19 22l1.500 4M13 22v3M17 22v3" /></>, true, true],
  ['Снимок', <><path d="M4.500 8.500h7V6h7v2.500h7V24h-21z" fill="#fff" /><circle cx="12.500" cy="16" r="5" fill="#ddd" /><circle cx="12.500" cy="16" r="2.500" fill="#333" /><circle cx="22" cy="13.500" r="1.500" /></>],
  ['Буфер', <><path d="M7 8h5l3-3 3 3h5v17H7z" fill="#fff" /><path d="M9.500 12.500h11M9.500 16.500h11M9.500 20.500h11" /></>],
];

function PenToolbox() {
  const [, setColor] = useState('#fff');
  return (
    <PenPanel>
      <PenBadge aria-label="Перо">
        <svg width="34" height="34" viewBox="0 0 34 34">
          <path d="M12 6h10l5 11-5 11h-4V19h-2v9h-4L7 17z" fill="#fff" />
          <circle cx="17" cy="16" r="3" fill="#000" />
        </svg>
      </PenBadge>
      <PenTools>
        {penTools.map(([label, shape, more, dot], i) => (
          <PenTool key={label} aria-label={label} $active={i < 2} $more={more}>
            <svg width="30" height="30" fill="none" stroke="#222" strokeWidth="1.300">
              {shape}
              {dot && <circle cx="26" cy="6" r="4" fill="#ff0f86" stroke="none" />}
            </svg>
          </PenTool>
        ))}
        <Swatches>
          {['#00aeef', '#fff200', '#ff0f86', '#000'].map(color => (
            <Swatch key={color} aria-label={color} $color={color} onClick={() => setColor(color)} />
          ))}
        </Swatches>
      </PenTools>
    </PenPanel>
  );
}

/* ---------- windows ---------- */

function EurUsdWindow() {
  return (
    <Frame $main>
      <TitleBar>
        <svg width="14" height="14" fill="#fff" stroke="#5090e0">
          <rect x="1" y="1" width="10" height="8" />
          <rect x="4" y="5" width="9" height="8" />
          <path d="M1 2h10M4 6h9" strokeWidth="2" />
        </svg>
        <WindowName>EURUSD,H1</WindowName>
        <WindowControls />
      </TitleBar>
      <Client>
        <Row $grow={1}>
          <Plot>
            <ClosePatch aria-label="W" />
            <BigNote $top={17} $left={771}>EUR/USD</BigNote>
            <BigNote $top={75} $left={794}>+100</BigNote>
            <MainChart />
            <Quote>EURUSD,H1   1.10473 1.10522 1.10439 1.10443</Quote>
            <Srb>SRB</Srb>
          </Plot>
          <Axis $margin="15px 0 -2px">
            {PRICES.map(price => <Price key={price}>{price}</Price>)}
            <PriceTag $top={393} $bg="#000" $ink="#3d7c90">1.10443</PriceTag>
            <PriceTag $top={443} $bg="#00bfff" $ink="#1c5c74">1.10004</PriceTag>
          </Axis>
        </Row>
        <Row>
          <Indicator>
            <IndicatorName>ИИМ Мастерская Трейдера</IndicatorName>
            <IconButton aria-label="Invisible">
              <svg width="26" height="16" viewBox="0 0 26 16">
                <path d="M0 8Q13-8 26 8 13 24 0 8z" fill="#f58a1f" />
                <circle cx="13" cy="8" r="7" fill="#fff" />
                <circle cx="13" cy="8" r="5" fill="#19a4e4" />
                <circle cx="13" cy="8" r="2.500" fill="#000" />
              </svg>
            </IconButton>
            <IconButton aria-label="News" $gap={14}>
              <svg width="26" height="18" viewBox="0 0 26 18">
                <path d="M2 0h22a2 2 0 012 2v9a2 2 0 01-2 2H14l-4 4v-4H2a2 2 0 01-2-2V2a2 2 0 012-2z" fill="#f39c12" />
                <text x="13" y="10" textAnchor="middle" fill="#fff" fontFamily="Liberation Sans, sans-serif" fontSize="9" fontWeight="700">News</text>
              </svg>
            </IconButton>
            <SiteLink href="#guru">www.invisible.guru</SiteLink>
            <IconButton aria-label="Восстановить">
              <svg width="12" height="12" fill="none" stroke="#b8c0cc"><path d="M4.500 3.500v-2h6v6h-3M1.500 4.500h6v5h-6z" /></svg>
            </IconButton>
            <IconButton aria-label="Убрать" $gap={8}>
              <svg width="10" height="10" stroke="#c8ced8" strokeWidth="1.500"><path d="M1 1l8 8M9 1L1 9" /></svg>
            </IconButton>
          </Indicator>
          <ZeroAxis>0<br />0</ZeroAxis>
        </Row>
        <TimeAxis>
          {TIMES.map(time => <Time key={time}>{time}</Time>)}
        </TimeAxis>
      </Client>
      <PenToolbox />
    </Frame>
  );
}

function Hour4Window() {
  return (
    <Frame $share={367} $inset={2}>
      <TitleBar><WindowName /><WindowControls /></TitleBar>
      <Client $dark>
        <Row $grow={1}>
          <Plot $light>
            <svg viewBox="1377 82 160 302" preserveAspectRatio="none">
              <path d="M1377 278.500h160" stroke="#778899" />
              <Candles data={HOUR4} start={1378} line="#0f0" hollow="#000" solid="#fff" />
              <path d="M1433 82h11l-5.500 5z" fill="#778899" />
            </svg>
          </Plot>
          <Axis $margin="-2px 0 -3px">
            {HOUR4_PRICES.map(price => <Price key={price}>{price}</Price>)}
            <PriceTag $top={194} $bg="#fff" $ink="#000">1.10443</PriceTag>
          </Axis>
        </Row>
        <SideTimes>Apr 08:00</SideTimes>
      </Client>
    </Frame>
  );
}

function DailyWindow() {
  return (
    <Frame $share={373}>
      <TitleBar><WindowName /><WindowControls /></TitleBar>
      <Client $dark>
        <Row $grow={206}>
          <Plot $light>
            <svg viewBox="1377 450 162 204" preserveAspectRatio="none" fill="none">
              <path d="M1377 583.500h162" stroke="#778899" />
              <Candles data={DAILY} start={1378} line="#0f0" hollow="#000" solid="#fff" />
              <g shapeRendering="crispEdges">
                <path d="M1378 457l22 8 20 8 14 4M1378 560l22 9 20 8 14 3" stroke="#fff" />
                <path d="M1378 592l22 9 20 8 14 3" stroke="#ff0" />
                <path d="M1378 618l22 9 20 8 14 3" stroke="#ffa500" />
                <path d="M1378 644l27 10" stroke="#f00" />
              </g>
              <path d="M1434 450h11l-5.500 5z" fill="#778899" />
            </svg>
          </Plot>
          <Axis $margin="-1px 0 -3px">
            {DAILY_PRICES.map(price => <Price key={price}>{price}</Price>)}
            <PriceTag $top={130} $bg="#fff" $ink="#000">1.10443</PriceTag>
          </Axis>
        </Row>
        <Row $grow={102}>
          <Plot $light>
            <svg viewBox="1377 657 162 100" preserveAspectRatio="none" fill="none">
              <path d="M1380 684.500h159M1380 747.500h159" stroke="#c0c0c0" strokeDasharray="4 4" />
              <path d="M1378 715l4-5 4 3 4-8 5-4 6 8h10l3-4 4 7 4-4 4-12 4-4 4 10" stroke="#ffd700" strokeWidth="2" />
            </svg>
          </Plot>
          <SubLabels>
            <span>12642.9</span>
            <span>0.00</span>
            <LowLabel $bottom={4}>-30000</LowLabel>
            <LowLabel $bottom={1}>-34898.9</LowLabel>
          </SubLabels>
        </Row>
        <SideTimes><span>0 Mar 2022</span><span>1 Apr 2022</span></SideTimes>
      </Client>
    </Frame>
  );
}

export default function App() {
  return (
    <Page>
      <GlobalStyle />
      <MenuBar>
        {['Файл', 'Вид', 'Вставка', 'Графики', 'Сервис', 'Окно', 'Справка'].map(item => (
          <button key={item}>{item}</button>
        ))}
      </MenuBar>
      <ToolBar>
        <Group>
          <Grip $edge />
          <Drop name="newChart" label="Новый график" />
          <Drop name="profiles" label="Профили" />
          <Separator />
          <Tool name="market" label="Обзор рынка" />
          <Tool name="target" label="Окно данных" />
          <Tool name="star" label="Навигатор" />
          <Tool name="list" label="Терминал" />
          <Tool name="tester" label="Тестер стратегий" />
          <Separator />
          <TextButton><Icon name="order" />Новый ордер</TextButton>
          <Tool name="book" label="MetaEditor" />
          <Tool name="cloud" label="Хостинг" />
          <Tool name="signal" label="Сигналы" />
          <TextButton><Icon name="robot" />Авто-торговля</TextButton>
        </Group>
        <Group>
          <Grip />
          <Tool name="bars" label="Бары" />
          <Tool name="candles" label="Свечи" pressed />
          <Tool name="line" label="Линия" />
          <Separator />
          <Tool name="zoomIn" label="Увеличить" />
          <Tool name="zoomOut" label="Уменьшить" />
          <Tool name="tiles" label="Окна мозаикой" />
          <Separator />
          <Tool name="scroll" label="Автопрокрутка" />
          <Tool name="shift" label="Сдвиг графика" pressed />
          <Separator />
          <Drop name="indicator" label="Индикаторы" />
          <Drop name="clock" label="Периоды" />
          <Drop name="template" label="Шаблоны" />
        </Group>
        <Group>
          <Grip />
          {['M1', 'M5', 'M15', 'M30', 'H1', 'H4', 'D1', 'W1', 'MN'].map(frame => (
            <ToolButton key={frame} $pressed={frame === 'H1'}>{frame}</ToolButton>
          ))}
        </Group>
        <Group>
          <Grip />
          <Tool name="cursor" label="Курсор" pressed />
          <Tool name="cross" label="Перекрестие" />
          <Separator />
          <Tool name="vline" label="Вертикальная линия" />
          <Tool name="hline" label="Горизонтальная линия" />
          <Tool name="trend" label="Трендовая линия" />
          <Tool name="rect" label="Прямоугольник" />
          <Tool name="fibo" label="Фибоначчи" />
          <ToolButton><b>A</b></ToolButton>
          <Tool name="label" label="Метка" />
          <Drop name="shapes" label="Стрелки" />
        </Group>
        <Tray>
          <IconButton aria-label="Поиск"><Icon name="search" /></IconButton>
          <IconButton aria-label="Уведомления">
            <svg width="24" height="22" viewBox="0 0 24 22">
              <path d="M8 8c10 0 10 10 1 10l-5 3 1-4C0 14 2 9 8 8z" fill="#e4e4e8" stroke="#aaa" />
              <circle cx="15" cy="9" r="8.500" fill="#dc3019" />
              <text x="15" y="13" textAnchor="middle" fill="#fff" fontFamily="Open Sans, sans-serif" fontSize="11">1</text>
            </svg>
          </IconButton>
        </Tray>
      </ToolBar>
      <Workspace>
        <Windows><EurUsdWindow /></Windows>
        <Windows><Hour4Window /><DailyWindow /></Windows>
      </Workspace>
      <StatusStrip />
    </Page>
  );
}
